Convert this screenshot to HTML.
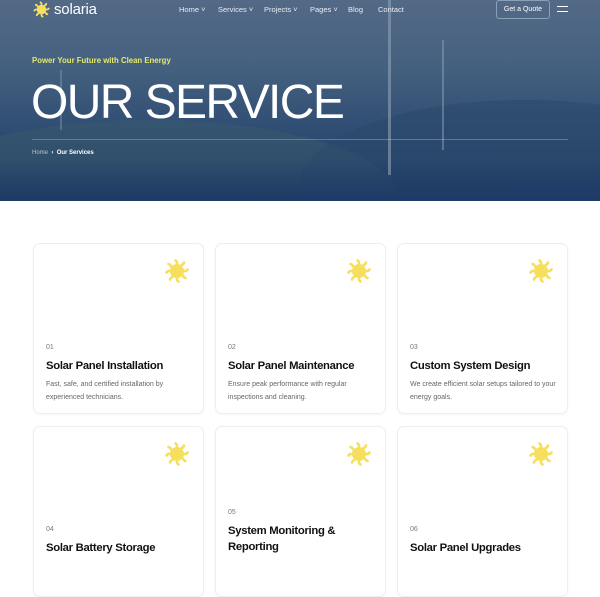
<!DOCTYPE html>
<html><head><style>
*{margin:0;padding:0;box-sizing:border-box}
body{width:600px;height:550px;overflow:hidden;background:#fff;font-family:"Liberation Sans",sans-serif;position:relative}
.hero{position:absolute;left:0;top:0;width:600px;height:201px;background:linear-gradient(180deg,#536a86 0%,#44607f 35%,#2f4d73 65%,#1e3a66 100%);overflow:hidden}
.hill{position:absolute;border-radius:50%}
.nav{position:absolute;top:5px;font-size:7.5px;color:#e8eef5}
.card{position:absolute;width:171px;height:171px;border:1px solid #eeeeee;border-radius:7px;background:#fff;box-shadow:0 1px 3px rgba(0,0,0,.04)}
.card svg{position:absolute;right:12px;top:13px}
.inner{position:absolute;left:12px;right:10px}
.num{font-size:7px;color:#777;height:14px}
.t{font-size:11.3px;font-weight:bold;color:#111;line-height:16px;letter-spacing:-.3px}
.d{font-size:7px;color:#666;line-height:13px;margin-top:4px}
</style></head><body>
<svg width="0" height="0" style="position:absolute"><defs><g id="sun"><circle cx="14" cy="14" r="7" fill="#f7df5e"/><g stroke="#f7df5e" stroke-width="2.6" stroke-linecap="round" fill="none">
<path d="M12.5 3.5q1.8 1.2 1.5 3"/><path d="M21 5.5q-.5 2-2.3 2.5"/><path d="M24.5 12.5q-1.2 1.8-3 1.5"/><path d="M22.5 21q-2-.5-2.5-2.3"/><path d="M15.5 24.5q-1.8-1.2-1.5-3"/><path d="M7 22.5q.5-2 2.3-2.5"/><path d="M3.5 15.5q1.2-1.8 3-1.5"/><path d="M5.5 7q2 .5 2.5 2.3"/></g></g></defs></svg>
<div class="hero">
<div class="hill" style="left:-100px;top:120px;width:500px;height:160px;background:#3a5a6a;opacity:.5"></div>
<div class="hill" style="left:300px;top:100px;width:450px;height:170px;background:#2c4a6a;opacity:.6"></div>
<div style="position:absolute;left:0;top:160px;width:600px;height:41px;background:linear-gradient(180deg,rgba(30,58,102,0),#1e3a66)"></div>
<div style="position:absolute;left:388px;top:0;width:3px;height:175px;background:#8fa0b5;opacity:.6"></div>
<div style="position:absolute;left:442px;top:40px;width:2px;height:110px;background:#8fa0b5;opacity:.5"></div>
<div style="position:absolute;left:60px;top:70px;width:2px;height:60px;background:#8fa0b5;opacity:.4"></div>
<svg style="position:absolute;left:32px;top:0" width="20" height="20"><use href="#sun" transform="scale(.68)"/></svg>
<div style="position:absolute;left:54px;top:1px;font-size:15px;color:#fff;letter-spacing:-.2px">solaria</div>
<div class="nav" style="left:179px">Home ˅</div>
<div class="nav" style="left:218px">Services ˅</div>
<div class="nav" style="left:264px">Projects ˅</div>
<div class="nav" style="left:310px">Pages ˅</div>
<div class="nav" style="left:348px">Blog</div>
<div class="nav" style="left:378px">Contact</div>
<div style="position:absolute;left:496px;top:0;width:54px;height:19px;border:1px solid #8aa0b8;border-radius:3px;font-size:7px;color:#fff;text-align:center;line-height:18px">Get a Quote</div>
<div style="position:absolute;left:557px;top:6px;width:11px;height:1px;background:#fff"></div>
<div style="position:absolute;left:557px;top:11px;width:11px;height:1px;background:#fff"></div>
<div style="position:absolute;left:32px;top:56px;font-size:7.8px;color:#e4e96c;font-weight:bold">Power Your Future with Clean Energy</div>
<div style="position:absolute;left:31px;top:76px;font-size:48px;color:#fff;letter-spacing:-1.6px;line-height:54px">OUR SERVICE</div>
<div style="position:absolute;left:32px;top:139px;width:536px;height:1px;background:rgba(200,215,180,.35)"></div>
<div style="position:absolute;left:32px;top:150px;font-size:6px;color:#b8c4d2">Home &nbsp;<b style="color:#fff">›</b>&nbsp; <span style="color:#fff;font-weight:bold">Our Services</span></div>
</div>

<div class="card" style="left:33px;top:243px"><svg width="28" height="28"><use href="#sun"/></svg><div class="inner" style="top:100px"><div class="num">01</div><div class="t">Solar Panel Installation</div><div class="d">Fast, safe, and certified installation by experienced technicians.</div></div></div>
<div class="card" style="left:215px;top:243px"><svg width="28" height="28"><use href="#sun"/></svg><div class="inner" style="top:100px"><div class="num">02</div><div class="t">Solar Panel Maintenance</div><div class="d">Ensure peak performance with regular inspections and cleaning.</div></div></div>
<div class="card" style="left:397px;top:243px"><svg width="28" height="28"><use href="#sun"/></svg><div class="inner" style="top:100px"><div class="num">03</div><div class="t">Custom System Design</div><div class="d">We create efficient solar setups tailored to your energy goals.</div></div></div>
<div class="card" style="left:33px;top:426px"><svg width="28" height="28"><use href="#sun"/></svg><div class="inner" style="top:99px"><div class="num">04</div><div class="t">Solar Battery Storage</div></div></div>
<div class="card" style="left:215px;top:426px"><svg width="28" height="28"><use href="#sun"/></svg><div class="inner" style="top:82px"><div class="num">05</div><div class="t">System Monitoring &amp;<br>Reporting</div></div></div>
<div class="card" style="left:397px;top:426px"><svg width="28" height="28"><use href="#sun"/></svg><div class="inner" style="top:99px"><div class="num">06</div><div class="t">Solar Panel Upgrades</div></div></div>
</body></html>
